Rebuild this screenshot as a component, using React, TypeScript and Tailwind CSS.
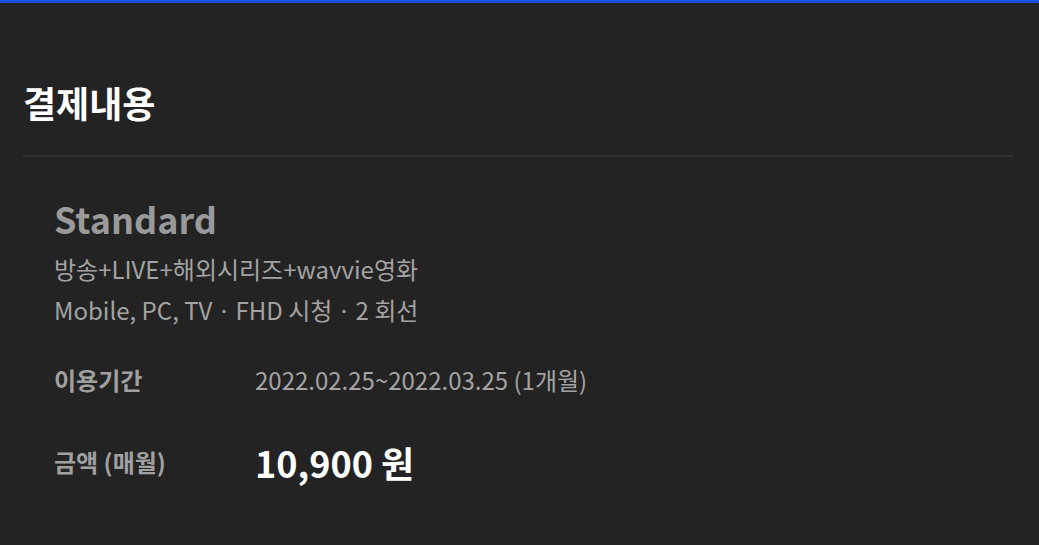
import React from 'react';

const font = { fontFamily: '"Noto Sans CJK KR", "Noto Sans", sans-serif' };
const Dot = () => <span className="mx-[3px]" style={{ fontFamily: '"Noto Sans", sans-serif' }}>·</span>;

export default function App() {
  return (
    <div className="w-[1039px] h-[545px] bg-[#232323] overflow-hidden" style={font}>
      <div className="h-[3px] bg-[#1c4fe6]" />
      <div className="px-[23px]">
        <h2 className="pt-[76px] pb-[30px] text-[36px] leading-[46px] font-bold text-white">결제내용</h2>
        <div className="w-[990px] h-[2px] bg-[#313131]" />
        <div className="pl-[31px] pt-[40px]">
          <div className="text-[36px] leading-[42px] font-bold text-[#9a9a9a]">Standard</div>
          <div className="mt-[18px] text-[24px] leading-[24px] text-[#a3a3a3] flex flex-col gap-[17px]">
            <div>방송+LIVE+해외시리즈+wavvie영화</div>
            <div>
              Mobile, PC, TV <Dot /> FHD 시청 <Dot /> 2 회선
            </div>
          </div>
          <div className="mt-[45px] flex items-center h-[24px]">
            <div className="w-[201px] text-[24px] leading-[24px] font-bold text-[#a0a0a0]">이용기간</div>
            <div className="text-[24px] leading-[24px] text-[#a3a3a3]">2022.02.25~2022.03.25 (1개월)</div>
          </div>
          <div className="mt-[48px] flex items-center h-[44px]">
            <div className="w-[201px] text-[24px] leading-[24px] font-bold text-[#a0a0a0]">금액 (매월)</div>
            <div className="text-[36px] leading-[44px] font-bold text-white">10,900 원</div>
          </div>
        </div>
      </div>
    </div>
  );
}
